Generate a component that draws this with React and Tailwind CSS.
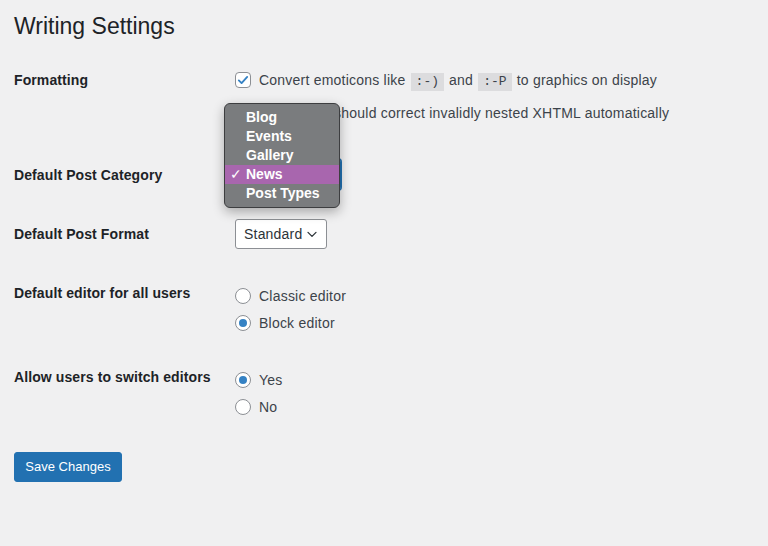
import React from "react";

function Checkbox({ checked }) {
  return (
    <span className="w-4 h-4 shrink-0 rounded-[4px] border border-[#8c8f94] bg-white flex items-center justify-center">
      {checked && (
        <svg width="14" height="14" viewBox="0 0 20 20">
          <path d="M4 10.5 L8 14.5 L16 5.5" fill="none" stroke="#3582c4" strokeWidth="2.6" strokeLinecap="round" strokeLinejoin="round" />
        </svg>
      )}
    </span>
  );
}

function Radio({ checked }) {
  return (
    <span className="w-4 h-4 shrink-0 rounded-full border border-[#8c8f94] bg-white flex items-center justify-center">
      {checked && <span className="w-2 h-2 rounded-full bg-[#3582c4]" />}
    </span>
  );
}

function Code({ children }) {
  return (
    <span className="inline-block mx-[1px] px-[5px] py-[1px] leading-4 tracking-normal bg-[#dcdcde] text-[13px] text-[#3c434a] font-['Liberation_Mono',monospace]">
      {children}
    </span>
  );
}

function Chevron() {
  return (
    <svg width="16" height="16" viewBox="0 0 20 20" className="shrink-0">
      <path d="M5 8 L10 13 L15 8" fill="none" stroke="#2c3338" strokeWidth="1.6" strokeLinecap="round" strokeLinejoin="round" />
    </svg>
  );
}

function Label({ children, className = "" }) {
  return (
    <div className={"w-[221px] shrink-0 text-[14px] leading-5 font-bold tracking-[0.1px] text-[#1d2327] " + className}>
      {children}
    </div>
  );
}

export default function App() {
  const items = ["Blog", "Events", "Gallery", "News", "Post Types"];
  return (
    <div className="relative min-h-[546px] w-[768px] bg-[#f0f0f1] px-[14px] pt-[11px] font-['Liberation_Sans',Arial,sans-serif] text-[#3c434a] text-[14px]">
      <h1 className="text-[23px] leading-[30px] font-normal text-[#1d2327]">Writing Settings</h1>

      {/* Formatting */}
      <div className="flex mt-[29px]">
        <Label>Formatting</Label>
        <div className="flex flex-col gap-[13px] tracking-[0.22px]">
          <div className="flex items-center h-5 gap-2">
            <Checkbox checked />
            <span>
              Convert emoticons like <Code>:-)</Code> and <Code>:-P</Code> to graphics on display
            </span>
          </div>
          <div className="flex items-center h-5 gap-2">
            <Checkbox />
            <span>WordPress should correct invalidly nested XHTML automatically</span>
          </div>
        </div>
      </div>

      {/* Default Post Category */}
      <div className="flex items-center mt-[36px] h-[31px]">
        <Label>Default Post Category</Label>
        <div className="relative">
          <div className="w-[106px] h-[31px] rounded-[3px] border border-[#2271b1] shadow-[0_0_0_1px_#2271b1] bg-white flex items-center justify-between pl-[8px] pr-[6px] text-[#2c3338]">
            <span>News</span>
            <Chevron />
          </div>
        </div>
      </div>

      {/* Default Post Format */}
      <div className="flex items-center mt-[29px] h-[30px]">
        <Label>Default Post Format</Label>
        <div className="w-[92px] h-[30px] rounded-[3px] border border-[#8c8f94] bg-white flex items-center justify-between pl-[8px] pr-[6px] text-[#2c3338] tracking-[0.2px]">
          <span>Standard</span>
          <Chevron />
        </div>
      </div>

      {/* Default editor */}
      <div className="flex mt-[34px]">
        <Label>Default editor for all users</Label>
        <div className="flex flex-col gap-[7px] pt-[3px] tracking-[0.22px]">
          <div className="flex items-center h-5 gap-2">
            <Radio />
            <span>Classic editor</span>
          </div>
          <div className="flex items-center h-5 gap-2">
            <Radio checked />
            <span>Block editor</span>
          </div>
        </div>
      </div>

      {/* Allow switch */}
      <div className="flex mt-[34px]">
        <Label>Allow users to switch editors</Label>
        <div className="flex flex-col gap-[7px] pt-[3px] tracking-[0.22px]">
          <div className="flex items-center h-5 gap-2">
            <Radio checked />
            <span>Yes</span>
          </div>
          <div className="flex items-center h-5 gap-2">
            <Radio />
            <span>No</span>
          </div>
        </div>
      </div>

      <button className="mt-[35px] h-[30px] w-[108px] rounded-[3px] border border-[#2271b1] bg-[#2271b1] text-white text-[13px] leading-[28px]">
        Save Changes
      </button>

      {/* Open native dropdown menu */}
      <div className="absolute left-[224px] top-[103px] w-[116px] py-[4px] rounded-[6px] border border-[#3d3e40] bg-[#7a7c7e] shadow-[0_4px_12px_rgba(0,0,0,0.3)] overflow-hidden">
        {items.map((it) => (
          <div
            key={it}
            className={
              "relative h-[19px] leading-[19px] pl-[21px] text-white font-bold text-[14px] " +
              (it === "News" ? "bg-[#a866ae]" : "")
            }
          >
            {it === "News" && (
              <span className="absolute left-[5px] top-0 font-normal">✓</span>
            )}
            {it}
          </div>
        ))}
      </div>
    </div>
  );
}
